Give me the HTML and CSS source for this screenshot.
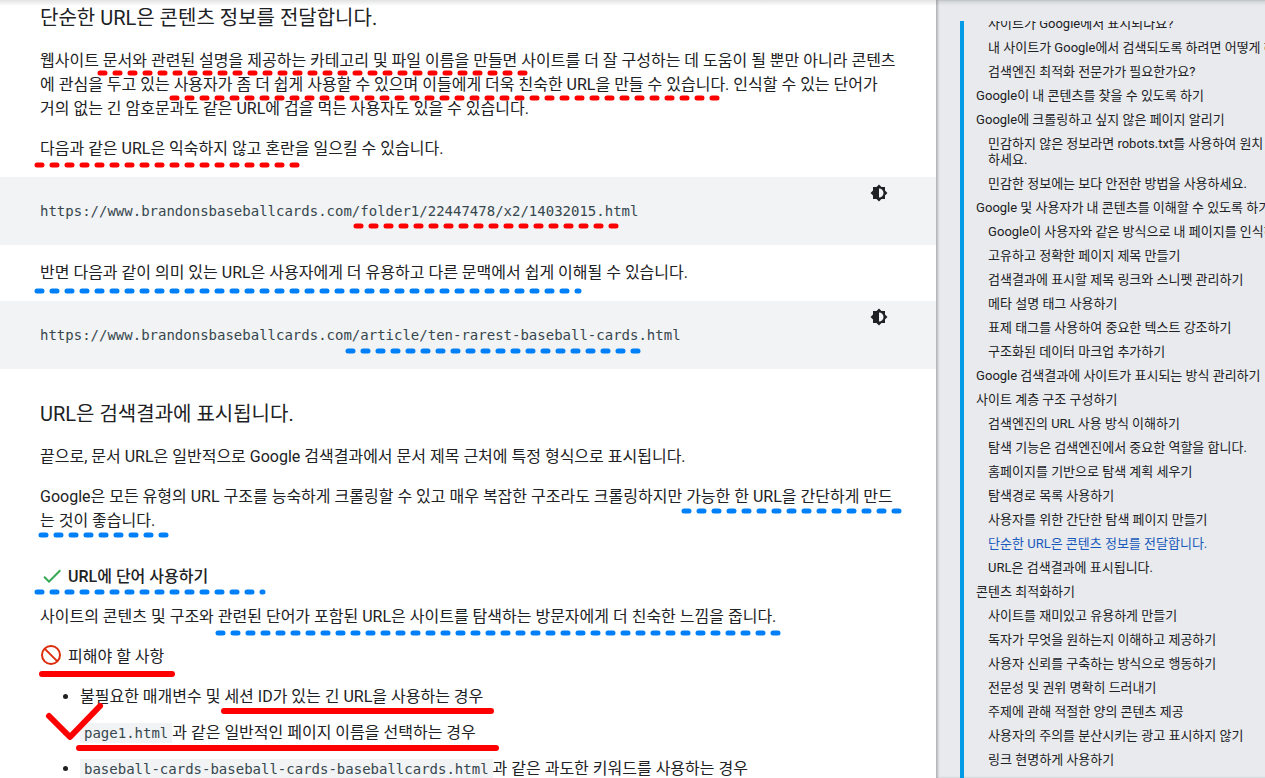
FILE: index.html
```
<!DOCTYPE html>
<html lang="ko">
<head>
    <meta charset="UTF-8">
    <meta name="viewport" content="width=device-width, initial-scale=1.0">
    <title>검색엔진 최적화(SEO) 기본 가이드</title>
    <link rel="stylesheet" href="styles.css">
</head>
<body>
    <div class="page">
        <main class="article">
            <h2>단순한 URL은 콘텐츠 정보를 전달합니다.</h2>
            <p>웹사이트 문서와 관련된 설명을 제공하는 카테고리 및 파일 이름을 만들면 사이트를 더 잘 구성하는 데 도움이 될 뿐만 아니라 콘텐츠에 관심을 두고 있는 사용자가 좀 더 쉽게 사용할 수 있으며 이들에게 더욱 친숙한 URL을 만들 수 있습니다. 인식할 수 있는 단어가 거의 없는 긴 암호문과도 같은 URL에 겁을 먹는 사용자도 있을 수 있습니다.</p>
            <p>다음과 같은 URL은 익숙하지 않고 혼란을 일으킬 수 있습니다.</p>
            <div class="code-block">
                <pre>https://www.brandonsbaseballcards.com/folder1/22447478/x2/14032015.html</pre>
                <button type="button" class="theme-button" aria-label="어두운 코드 테마">
                    <svg viewBox="0 0 24 24" width="18" height="18"><path fill="#202124" fill-rule="evenodd" d="M20 8.69V4h-4.69L12 .69 8.69 4H4v4.69L.69 12 4 15.31V20h4.69L12 23.31 15.31 20H20v-4.69L23.31 12zM12 18V6c3.31 0 6 2.69 6 6s-2.69 6-6 6z"/></svg>
                </button>
            </div>
            <p>반면 다음과 같이 의미 있는 URL은 사용자에게 더 유용하고 다른 문맥에서 쉽게 이해될 수 있습니다.</p>
            <div class="code-block">
                <pre>https://www.brandonsbaseballcards.com/article/ten-rarest-baseball-cards.html</pre>
                <button type="button" class="theme-button" aria-label="어두운 코드 테마">
                    <svg viewBox="0 0 24 24" width="18" height="18"><path fill="#202124" fill-rule="evenodd" d="M20 8.69V4h-4.69L12 .69 8.69 4H4v4.69L.69 12 4 15.31V20h4.69L12 23.31 15.31 20H20v-4.69L23.31 12zM12 18V6c3.31 0 6 2.69 6 6s-2.69 6-6 6z"/></svg>
                </button>
            </div>

            <h2>URL은 검색결과에 표시됩니다.</h2>
            <p>끝으로, 문서 URL은 일반적으로 Google 검색결과에서 문서 제목 근처에 특정 형식으로 표시됩니다.</p>
            <p>Google은 모든 유형의 URL 구조를 능숙하게 크롤링할 수 있고 매우 복잡한 구조라도 크롤링하지만 가능한 한 URL을 간단하게 만드는 것이 좋습니다.</p>

            <h3 class="with-icon">
                <svg viewBox="0 0 24 24" width="24" height="24"><path fill="#34a853" d="M9 15.17L4.83 11l-1.42 1.41L9 18 21 6l-1.41-1.41z"/></svg>
                URL에 단어 사용하기
            </h3>
            <p>사이트의 콘텐츠 및 구조와 관련된 단어가 포함된 URL은 사이트를 탐색하는 방문자에게 더 친숙한 느낌을 줍니다.</p>
            <p class="with-icon">
                <svg viewBox="0 0 24 24" width="24" height="24" fill="none" stroke="#dc2c0c" stroke-width="2"><circle cx="11" cy="10" r="9"/><path d="M4.6 3.6l12.8 12.8"/></svg>
                피해야 할 사항
            </p>
            <ul class="avoid-list">
                <li>불필요한 매개변수 및 세션 ID가 있는 긴 URL을 사용하는 경우</li>
                <li><code>page1.html</code>과 같은 일반적인 페이지 이름을 선택하는 경우</li>
                <li><code>baseball-cards-baseball-cards-baseballcards.html</code>과 같은 과도한 키워드를 사용하는 경우</li>
            </ul>
        </main>

        <aside class="sidebar">
            <nav class="toc">
                <ul>
                    <li class="sub"><a href="#">사이트가 Google에서 표시되나요?</a></li>
                    <li class="sub"><a href="#">내 사이트가 Google에서 검색되도록 하려면 어떻게 해야 하나요?</a></li>
                    <li class="sub"><a href="#">검색엔진 최적화 전문가가 필요한가요?</a></li>
                    <li><a href="#">Google이 내 콘텐츠를 찾을 수 있도록 하기</a></li>
                    <li><a href="#">Google에 크롤링하고 싶지 않은 페이지 알리기</a></li>
                    <li class="sub"><a href="#">민감하지 않은 정보라면 robots.txt를 사용하여 원치<br>하세요.</a></li>
                    <li class="sub"><a href="#">민감한 정보에는 보다 안전한 방법을 사용하세요.</a></li>
                    <li><a href="#">Google 및 사용자가 내 콘텐츠를 이해할 수 있도록 하기</a></li>
                    <li class="sub"><a href="#">Google이 사용자와 같은 방식으로 내 페이지를 인식하게 하기</a></li>
                    <li class="sub"><a href="#">고유하고 정확한 페이지 제목 만들기</a></li>
                    <li class="sub"><a href="#">검색결과에 표시할 제목 링크와 스니펫 관리하기</a></li>
                    <li class="sub"><a href="#">메타 설명 태그 사용하기</a></li>
                    <li class="sub"><a href="#">표제 태그를 사용하여 중요한 텍스트 강조하기</a></li>
                    <li class="sub"><a href="#">구조화된 데이터 마크업 추가하기</a></li>
                    <li><a href="#">Google 검색결과에 사이트가 표시되는 방식 관리하기</a></li>
                    <li><a href="#">사이트 계층 구조 구성하기</a></li>
                    <li class="sub"><a href="#">검색엔진의 URL 사용 방식 이해하기</a></li>
                    <li class="sub"><a href="#">탐색 기능은 검색엔진에서 중요한 역할을 합니다.</a></li>
                    <li class="sub"><a href="#">홈페이지를 기반으로 탐색 계획 세우기</a></li>
                    <li class="sub"><a href="#">탐색경로 목록 사용하기</a></li>
                    <li class="sub"><a href="#">사용자를 위한 간단한 탐색 페이지 만들기</a></li>
                    <li class="sub"><a href="#" class="active">단순한 URL은 콘텐츠 정보를 전달합니다.</a></li>
                    <li class="sub"><a href="#">URL은 검색결과에 표시됩니다.</a></li>
                    <li><a href="#">콘텐츠 최적화하기</a></li>
                    <li class="sub"><a href="#">사이트를 재미있고 유용하게 만들기</a></li>
                    <li class="sub"><a href="#">독자가 무엇을 원하는지 이해하고 제공하기</a></li>
                    <li class="sub"><a href="#">사용자 신뢰를 구축하는 방식으로 행동하기</a></li>
                    <li class="sub"><a href="#">전문성 및 권위 명확히 드러내기</a></li>
                    <li class="sub"><a href="#">주제에 관해 적절한 양의 콘텐츠 제공</a></li>
                    <li class="sub"><a href="#">사용자의 주의를 분산시키는 광고 표시하지 않기</a></li>
                    <li class="sub"><a href="#">링크 현명하게 사용하기</a></li>
                </ul>
            </nav>
        </aside>

        <!-- hand-drawn marks over the text -->
        <svg class="marks" width="936" height="778" viewBox="0 0 936 778" aria-hidden="true">
            <g class="dash red">
                <path d="M100 73H525"/>
                <path d="M172 98H718"/>
                <path d="M37 165H298"/>
                <path d="M356 226H617"/>
            </g>
            <g class="dash blue">
                <path d="M37 291H579"/>
                <path d="M348 351H639"/>
                <path d="M684 511H900"/>
                <path d="M41 535H167"/>
                <path d="M37 592H263"/>
                <path d="M218 633H779"/>
            </g>
            <g class="solid red">
                <path d="M42 674H172"/>
                <path d="M224 711H491"/>
                <path d="M79 748H496"/>
                <path d="M49 716L70 737L100 706"/>
            </g>
        </svg>
    </div>
</body>
</html>
```
FILE: styles.css
```
* {
    box-sizing: border-box;
}
body {
    margin: 0;
    font-family: Roboto, "Noto Sans CJK KR", sans-serif;
    font-size: 16px;
    line-height: 24px;
    color: #202124;
    background: #fff;
}
.page {
    position: relative;
    display: flex;
    height: 100vh;
    overflow: hidden;
}
/* shadow of the header above */
.page::before {
    content: "";
    position: absolute;
    top: 0;
    left: 0;
    right: 0;
    height: 6px;
    z-index: 1;
    background: linear-gradient(rgba(60, 64, 67, 0.15), rgba(60, 64, 67, 0));
}
.article {
    flex: 1;
    min-width: 0;
    padding: 6px 40px 0;
}
h2 {
    margin: 33px 0 19px;
    font-size: 20px;
    font-weight: 400;
    line-height: 24px;
}
h2:first-child {
    margin-top: 0;
}
h3 {
    margin: 32px 0 16px;
    font-size: 16px;
    font-weight: 500;
}
p {
    margin: 16px 0;
}
.with-icon {
    display: flex;
    gap: 4px;
}
.code-block {
    display: flex;
    justify-content: space-between;
    align-items: flex-start;
    margin: 16px -40px;
    padding: 0 48px 0 40px;
    background: #f1f3f4;
}
pre {
    margin: 0;
    padding: 24px 0;
    font-family: "DejaVu Sans Mono", monospace;
    font-size: 14px;
    line-height: 20px;
    color: #37474f;
}
.theme-button {
    display: flex;
    margin: 0;
    padding: 7px 0;
    border: 0;
    background: none;
    cursor: pointer;
}
.avoid-list {
    margin: 16px 0;
    padding-left: 40px;
}
.avoid-list li {
    margin-bottom: 12px;
}
code {
    padding: 2px 4px;
    font-family: "DejaVu Sans Mono", monospace;
    font-size: 14px;
    font-weight: 500;
    color: #37474f;
    background: #f1f3f4;
}
.sidebar {
    flex: 0 0 26%;
    min-width: 0;
    padding: 21px 0 0 24px;
    background: #e8eaed;
    box-shadow: inset 2px 0 2px rgba(60, 64, 67, 0.3);
}
.toc {
    height: 100%;
    overflow: hidden;
    border-left: 4px solid #039be5;
    font-size: 13px;
    line-height: 16px;
    white-space: nowrap;
}
.toc ul {
    margin: -5px 0 0;
    padding: 0 0 0 12px;
    list-style: none;
}
.toc li {
    margin-bottom: 8px;
}
.toc .sub {
    padding-left: 12px;
}
.toc a {
    display: block;
    color: #202124;
    text-decoration: none;
}
.toc .active {
    color: #185abc;
}
.marks {
    position: absolute;
    top: 0;
    left: 0;
    fill: none;
    stroke-linecap: round;
    stroke-linejoin: round;
    pointer-events: none;
}
.dash {
    stroke-width: 5;
    stroke-dasharray: 5 10;
}
.solid {
    stroke-width: 6;
}
.red {
    stroke: #ff0000;
}
.blue {
    stroke: #0080f8;
}
```
